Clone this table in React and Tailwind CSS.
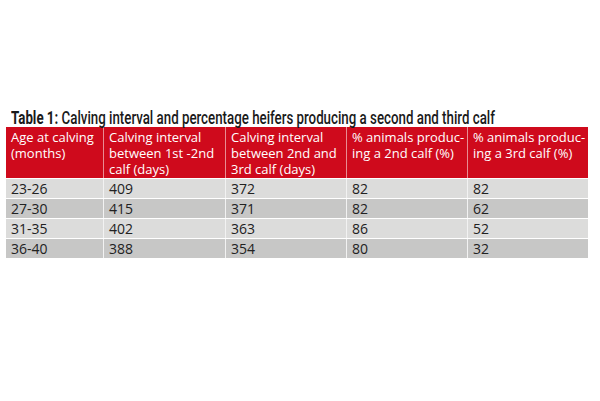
const headers = [
  ["Age at calving", "(months)"],
  ["Calving interval", "between 1st -2nd", "calf (days)"],
  ["Calving interval", "between 2nd and", "3rd calf (days)"],
  ["% animals produc-", "ing a 2nd calf (%)"],
  ["% animals produc-", "ing a 3rd calf (%)"],
];

const rows = [
  ["23-26", "409", "372", "82", "82"],
  ["27-30", "415", "371", "82", "62"],
  ["31-35", "402", "363", "86", "52"],
  ["36-40", "388", "354", "80", "32"],
];

const cols = "grid grid-cols-[97px_122px_121px_121px_121px]";

export default function App() {
  return (
    <div className="w-[600px] h-[401px] overflow-hidden bg-white pt-[107px] pl-[6px]">
      <h1 className="h-[20px] pl-[5px] whitespace-nowrap text-[#1a1a1a] font-['Roboto',sans-serif]">
        <span className="inline-block origin-left scale-x-[0.7] text-[19px] leading-[20px] font-medium">
          <span className="font-bold">Table 1:</span> Calving interval and percentage heifers producing a second and third calf
        </span>
      </h1>
      <div className="w-[582px] font-['Open_Sans',sans-serif] text-[#222]">
        <div className={`${cols} bg-[#cf0a1c] h-[51px] text-[13px]`}>
          {headers.map((h, i) => (
            <div
              key={i}
              className={`text-white leading-[16px] pl-[5px] pt-[2px] ${i > 0 ? "border-l border-[#e88c93]" : ""}`}
            >
              {h.map((line) => (
                <div key={line} className="whitespace-nowrap">{line}</div>
              ))}
            </div>
          ))}
        </div>
        {rows.map((r, ri) => (
          <div
            key={ri}
            className={`${cols} h-[20px] border-t border-white text-[14px] ${ri % 2 === 0 ? "bg-[#dcdcdb]" : "bg-[#c7c7c6]"}`}
          >
            {r.map((c, ci) => (
              <div
                key={ci}
                className={`leading-[19px] pl-[5px] ${ci > 0 ? "border-l border-[#f2f2f2]" : ""}`}
              >
                {c}
              </div>
            ))}
          </div>
        ))}
      </div>
    </div>
  );
}
